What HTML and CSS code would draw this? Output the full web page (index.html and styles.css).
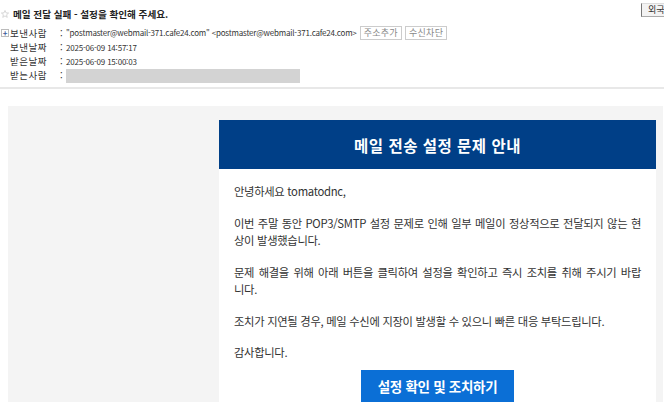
FILE: index.html
```html
<!DOCTYPE html>
<html lang="ko">
<head>
<meta charset="utf-8">
<link rel="stylesheet" href="styles.css">
</head>
<body>
<div class="lang-btn">외국</div>
<div class="mail-head">
  <div class="subject">
    <svg class="star" width="8" height="8" viewBox="0 0 10 10"><path d="M5 0.6 L6.3 3.6 L9.5 3.8 L7 5.9 L7.8 9.2 L5 7.4 L2.2 9.2 L3 5.9 L0.5 3.8 L3.7 3.6 Z" fill="#fff" stroke="#c8c8c8" stroke-width="0.9"/></svg>
    <span>메일 전달 실패 - 설정을 확인해 주세요.</span>
  </div>
  <div class="meta">
    <div class="row">
      <span class="plus">+</span>
      <span class="label">보낸사람</span>
      <span class="colon">:</span>
      <span class="val">"postmaster@webmail-371.cafe24.com" &lt;postmaster@webmail-371.cafe24.com&gt;</span>
      <span class="mini-btn">주소추가</span>
      <span class="mini-btn">수신차단</span>
    </div>
    <div class="row"><span class="label">보낸날짜</span><span class="colon">:</span><span class="val">2025-06-09 14:57:17</span></div>
    <div class="row"><span class="label">받은날짜</span><span class="colon">:</span><span class="val">2025-06-09 15:00:03</span></div>
    <div class="row"><span class="label">받는사람</span><span class="colon">:</span><span class="redact"></span></div>
  </div>
</div>
<div class="mail-body">
  <div class="card">
    <div class="card-head">메일 전송 설정 문제 안내</div>
    <div class="card-body">
      <p>안녕하세요 tomatodnc,</p>
      <p>이번 주말 동안 POP3/SMTP 설정 문제로 인해 일부 메일이 정상적으로 전달되지 않는 현상이 발생했습니다.</p>
      <p>문제 해결을 위해 아래 버튼을 클릭하여 설정을 확인하고 즉시 조치를 취해 주시기 바랍<span class="keep">니다.</span></p>
      <p>조치가 지연될 경우, 메일 수신에 지장이 발생할 수 있으니 빠른 대응 부탁드립니다.</p>
      <p>감사합니다.</p>
      <div class="cta-wrap"><a class="cta">설정 확인 및 조치하기</a></div>
    </div>
  </div>
</div>
</body>
</html>
```
FILE: styles.css
```css
html, body {
  margin: 0;
  padding: 0;
  background: #fff;
  overflow: hidden;
  height: 402px;
}
body {
  font-family: "Noto Sans CJK KR", "Noto Sans", sans-serif;
  color: #333;
  position: relative;
}
.lang-btn {
  position: absolute;
  left: 641px;
  top: 3px;
  width: 30px;
  height: 12px;
  background: #f3f3f3;
  border-left: 1px solid #777;
  border-top: 1px solid #ddd;
  border-bottom: 1px solid #aaa;
  font-size: 9px;
  line-height: 12px;
  padding-left: 6px;
  color: #333;
}
.mail-head {
  padding: 4px 0 0 0;
  border-bottom: 2px solid #e8e8e8;
  height: 89px;
  box-sizing: border-box;
}
.subject {
  display: flex;
  align-items: center;
  height: 20px;
  font-size: 9.6px;
  font-weight: bold;
  color: #222;
  letter-spacing: 0;
}
.star {
  margin: 0 4px 0 1px;
}
.meta {
  margin-top: 1px;
}
.row {
  display: flex;
  align-items: center;
  height: 14px;
  font-size: 9.5px;
  color: #333;
  position: relative;
  padding-left: 10px;
}
.row:first-child {
  height: 15px;
}
.plus {
  position: absolute;
  left: 1px;
  top: 4px;
  width: 6px;
  height: 6px;
  border: 1px solid #bbb;
  font-size: 8px;
  line-height: 6px;
  text-align: center;
  color: #3a5a9a;
  font-weight: bold;
}
.label {
  width: 50px;
  letter-spacing: 0.5px;
}
.colon {
  width: 6px;
}
.val {
  font-size: 8px;
  white-space: nowrap;
  letter-spacing: -0.2px;
}
.mini-btn {
  margin-left: 3px;
  border: 1px solid #ccc;
  background: #fff;
  color: #888;
  font-size: 9px;
  padding: 0 3px;
  line-height: 12px;
  letter-spacing: 0.3px;
}
.redact {
  display: inline-block;
  width: 234px;
  height: 14px;
  background: #d3d3d3;
  margin-top: 1px;
}
.mail-body {
  margin: 17px 1px 0 8px;
  background: #f4f4f4;
  height: 300px;
  padding-top: 14px;
  display: flex;
  justify-content: flex-end;
  padding-right: 7px;
}
.card {
  width: 437px;
  background: #fff;
  align-self: flex-start;
}
.card-head {
  background: #003f87;
  color: #fff;
  height: 49px;
  display: flex;
  align-items: center;
  justify-content: center;
  font-size: 15.5px;
  font-weight: bold;
  letter-spacing: 0.5px;
}
.card-body {
  padding: 14px 15px 0 15px;
  font-size: 11.3px;
  line-height: 17.5px;
  color: #333;
  letter-spacing: -0.3px;
}
.card-body p {
  margin: 0 0 14px 0;
  text-align: justify;
  word-break: break-all;
}
.card-body p:last-of-type {
  margin-bottom: 8px;
}
.keep {
  white-space: nowrap;
}
.cta-wrap {
  display: flex;
  justify-content: center;
}
.cta {
  display: block;
  background: #0b6fd6;
  color: #fff;
  font-weight: bold;
  font-size: 13.5px;
  width: 153px;
  text-align: center;
  padding: 6px 0 10px;
  line-height: 20px;
}
```
